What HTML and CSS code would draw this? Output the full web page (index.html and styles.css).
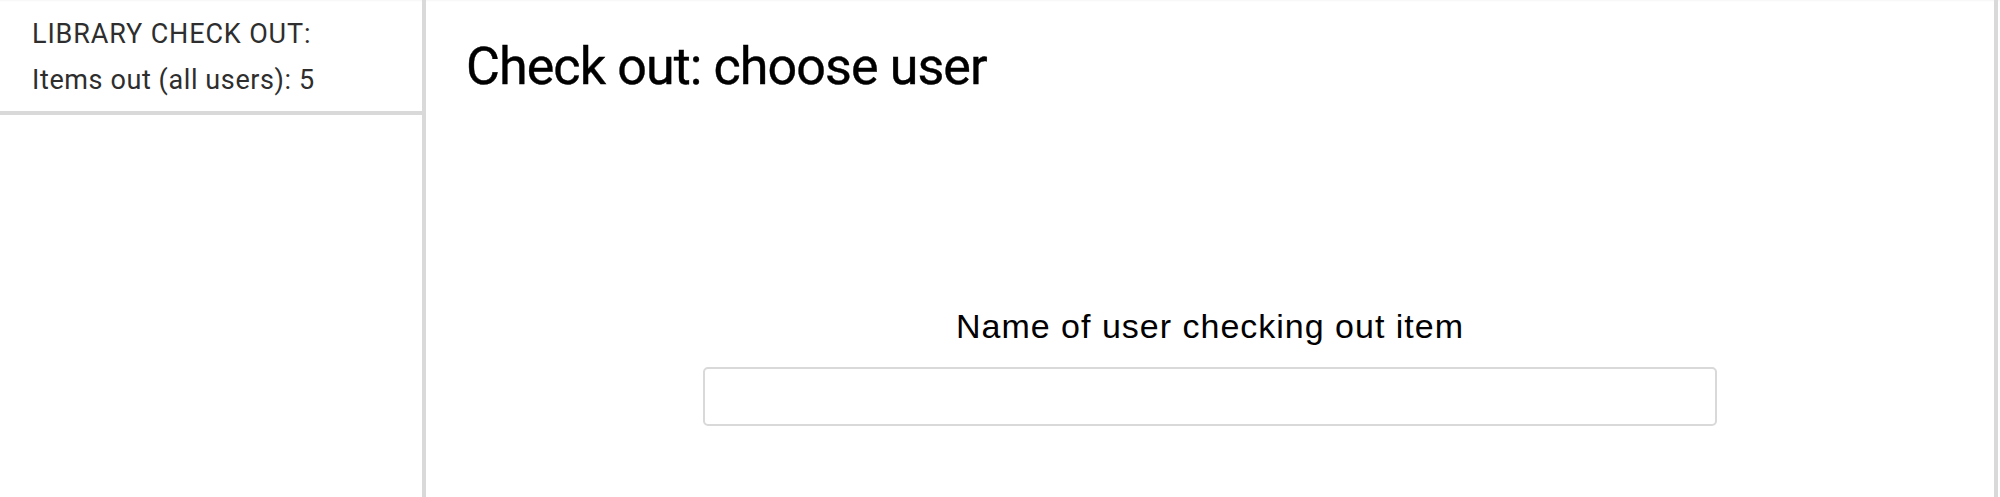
FILE: index.html
```html
<!DOCTYPE html>
<html lang="en">
<head>
<meta charset="utf-8">
<title>Check out: choose user</title>
<link rel="stylesheet" href="styles.css">
</head>
<body>
<div class="app">
  <aside class="sidebar">
    <div class="sidebar-head">
      <div class="sidebar-title">LIBRARY CHECK OUT:</div>
      <div class="sidebar-count">Items out (all users): 5</div>
    </div>
  </aside>
  <main class="main">
    <h1 class="page-title">Check out: choose user</h1>
    <form class="user-form">
      <label class="field-label" for="user-name">Name of user checking out item</label>
      <input class="field-input" id="user-name" type="text">
    </form>
  </main>
</div>
</body>
</html>
```

FILE: styles.css
```css
html, body {
  margin: 0;
  padding: 0;
  background: #fff;
}

.app {
  display: flex;
  min-height: 100vh;
  padding-right: 2px;
  box-sizing: border-box;
  box-shadow: inset 0 2px 2px -1px rgba(0, 0, 0, 0.04);
}

.sidebar {
  width: 422px;
  flex: none;
  border-right: 4px solid #d9d9d9;
}

.sidebar-head {
  padding: 11px 32px 8px;
  border-bottom: 4px solid #d9d9d9;
  font-family: Roboto, "Liberation Sans", sans-serif;
  font-size: 27px;
  line-height: 46px;
  letter-spacing: 0.6px;
  color: #2e2e2e;
}

.sidebar-title {
  letter-spacing: 0.85px;
}

.main {
  flex: 1;
  border-right: 4px solid #d9d9d9;
  padding: 36px 0 0 40px;
}

.page-title {
  margin: 0;
  font-family: Roboto, "Liberation Sans", sans-serif;
  font-weight: 400;
  font-size: 52px;
  line-height: 62px;
  letter-spacing: -0.9px;
  color: #000;
  -webkit-text-stroke: 0.4px #000;
}

.user-form {
  width: 1014px;
  margin: 210px auto 0;
  position: relative;
  left: -20px;
  display: flex;
  flex-direction: column;
  align-items: center;
  gap: 23px;
}

.field-label {
  font-family: "Liberation Sans", Arial, sans-serif;
  font-size: 34px;
  line-height: 36px;
  letter-spacing: 1px;
  color: #000;
}

.field-input {
  width: 100%;
  height: 59px;
  box-sizing: border-box;
  border: 2px solid #d9d9d9;
  border-radius: 5px;
  background: #fff;
  outline: none;
  margin: 0;
}
```
